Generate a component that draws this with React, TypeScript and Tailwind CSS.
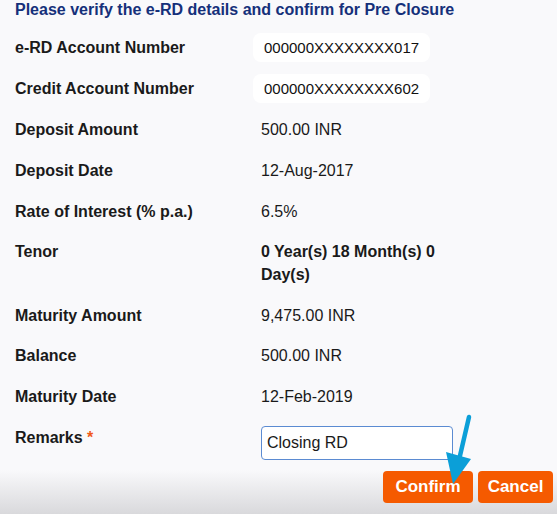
import React from 'react';

const rows: { label: string; value: string; boxed?: boolean; bold?: boolean; nudge?: boolean }[] = [
  { label: 'e-RD Account Number', value: '000000XXXXXXXX017', boxed: true },
  { label: 'Credit Account Number', value: '000000XXXXXXXX602', boxed: true },
  { label: 'Deposit Amount', value: '500.00 INR' },
  { label: 'Deposit Date', value: '12-Aug-2017' },
  { label: 'Rate of Interest (% p.a.)', value: '6.5%' },
  { label: 'Tenor', value: '0 Year(s) 18 Month(s) 0 Day(s)', bold: true, nudge: true },
  { label: 'Maturity Amount', value: '9,475.00 INR' },
  { label: 'Balance', value: '500.00 INR', nudge: true },
  { label: 'Maturity Date', value: '12-Feb-2019' },
];

const App = () => {
  return (
    <div
      className="relative w-[557px] h-[514px] overflow-hidden bg-[#f9f9fb] text-[#1a1a1a]"
      style={{ fontFamily: '"Liberation Sans", Arial, sans-serif' }}
    >
      <h1 className="pl-[15px] pt-[1px] text-[16px] leading-[18px] font-bold text-[#15307a]">
        Please verify the e-RD details and confirm for Pre Closure
      </h1>

      <div className="mt-[8px] flex flex-col">
        {rows.map((r) => (
          <div key={r.label} className={`flex py-[9px] ${r.nudge ? '-mt-[1px]' : ''}`}>
            <div className="w-[261px] shrink-0 pl-[15px] text-[16px] leading-[23px] font-bold">{r.label}</div>
            {r.boxed ? (
              <div className="-ml-[8px] -my-[3px] px-[11px] py-[3px] bg-white rounded-[8px] text-[15px] leading-[23px] text-[#111]">
                {r.value}
              </div>
            ) : (
              <div
                className={`w-[190px] text-[16px] leading-[23px] ${r.bold ? 'font-bold' : ''}`}
              >
                {r.value}
              </div>
            )}
          </div>
        ))}

        <div className="flex pt-[9px]">
          <div className="w-[261px] shrink-0 pl-[15px] text-[16px] leading-[23px] font-bold">
            Remarks <span className="text-[#f05a1a]">*</span>
          </div>
          <div className="w-[192px] h-[34px] border border-[#5b8bd2] rounded-[4px] bg-white flex items-center pl-[5px] text-[16px]">
            Closing RD
          </div>
        </div>
      </div>

      <div className="absolute left-0 right-0 bottom-0 h-[44px] bg-gradient-to-b from-[#f9f9fb] to-[#d9d9dc]" />

      <div className="relative mt-[11px] flex justify-end gap-[5px] pr-[4px]">
        <button className="w-[90px] h-[32px] rounded-[4px] bg-[#f55a00] text-white text-[17px] font-bold">
          Confirm
        </button>
        <button className="w-[75px] h-[32px] rounded-[4px] bg-[#f55a00] text-white text-[17px] font-bold">
          Cancel
        </button>
      </div>

      <svg className="absolute left-0 top-0 pointer-events-none" width="557" height="514">
        <line x1="469" y1="417" x2="459" y2="460" stroke="#0b9fd8" strokeWidth="4.5" strokeLinecap="round" />
        <polygon points="446,452 471,459 453,484" fill="#0b9fd8" />
      </svg>
    </div>
  );
};

export default App;
